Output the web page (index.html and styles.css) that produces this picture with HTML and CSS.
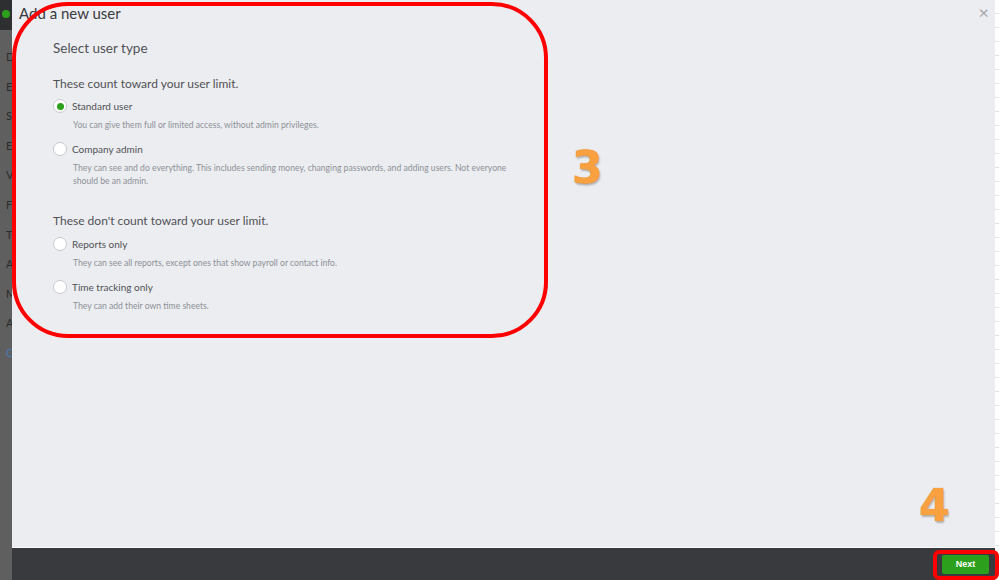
FILE: index.html
```html
<!DOCTYPE html>
<html lang="en">

<head>
    <meta charset="UTF-8">
    <meta name="viewport" content="width=device-width, initial-scale=1.0">
    <title>Add a new user</title>
    <link rel="stylesheet" href="styles.css">
</head>

<body>
    <div class="app">
        <aside class="sidebar">
            <div class="brand"><span class="brand-dot"></span></div>
            <ul class="nav">
                <li>D</li>
                <li>E</li>
                <li>S</li>
                <li>E</li>
                <li>V</li>
                <li>F</li>
                <li>T</li>
                <li>A</li>
                <li>M</li>
                <li>A</li>
                <li class="nav-link">C</li>
            </ul>
        </aside>

        <div class="dialog">
            <div class="dialog-body">
                <div class="dialog-head">
                    <h1>Add a new user</h1>
                    <span class="close">&times;</span>
                </div>

                <div class="user-types">
                    <h2>Select user type</h2>

                    <h3>These count toward your user limit.</h3>
                    <div class="option">
                        <span class="radio checked"></span>
                        <div>
                            <div class="option-title">Standard user</div>
                            <p>You can give them full or limited access, without admin privileges.</p>
                        </div>
                    </div>
                    <div class="option">
                        <span class="radio"></span>
                        <div>
                            <div class="option-title">Company admin</div>
                            <p>They can see and do everything. This includes sending money, changing passwords, and adding users. Not everyone should be an admin.</p>
                        </div>
                    </div>

                    <h3 class="second">These don't count toward your user limit.</h3>
                    <div class="option">
                        <span class="radio"></span>
                        <div>
                            <div class="option-title">Reports only</div>
                            <p>They can see all reports, except ones that show payroll or contact info.</p>
                        </div>
                    </div>
                    <div class="option">
                        <span class="radio"></span>
                        <div>
                            <div class="option-title">Time tracking only</div>
                            <p>They can add their own time sheets.</p>
                        </div>
                    </div>
                </div>

                <!-- annotations drawn on the screenshot -->
                <div class="mark-box"></div>
                <span class="step step-3">3</span>
                <span class="step step-4">4</span>
            </div>

            <div class="dialog-foot">
                <button class="btn-next">Next</button>
                <div class="mark-next"></div>
            </div>
        </div>

        <div class="edge"></div>
    </div>
</body>

</html>
```

FILE: styles.css
```css
* {
    box-sizing: border-box;
}

body {
    margin: 0;
    font-family: Lato, "Open Sans", sans-serif;
    color: #393a3d;
    overflow: hidden;
}

.app {
    display: flex;
    height: 580px;
}

.sidebar {
    width: 12px;
    flex: none;
    background: #5f5f60;
    overflow: hidden;
}

.brand {
    height: 30px;
    background: #2e2f30;
    padding: 10px 0 0 0;
}

.brand-dot {
    display: block;
    width: 8px;
    height: 8px;
    margin-left: 2px;
    border-radius: 50%;
    background: #2ca01c;
}

.nav {
    list-style: none;
    margin: 0;
    padding: 20px 0 0 6px;
    font-size: 11px;
    color: #2b2b2b;
}

.nav li {
    height: 29.6px;
}

.nav .nav-link {
    color: #4a78b0;
}

.dialog {
    flex: 1;
    display: flex;
    flex-direction: column;
    min-width: 0;
}

.dialog-body {
    position: relative;
    flex: 1;
    background: #ecedf1;
    border-bottom: 1px solid #fafafa;
}

.dialog-head {
    display: flex;
    justify-content: space-between;
    align-items: flex-start;
    padding: 4px 6px 0 7px;
}

.dialog-head h1 {
    margin: 0;
    font-size: 15px;
    font-weight: 400;
    color: #393a3d;
}

.close {
    font-size: 18px;
    line-height: 17px;
    color: #a5a6a9;
    margin-top: 0;
}

.user-types {
    padding: 18px 0 0 41px;
    width: 520px;
}

.user-types h2 {
    margin: 0 0 20px;
    font-size: 13.5px;
    font-weight: 400;
    color: #505155;
}

.user-types h3 {
    margin: 0 0 8px;
    font-size: 12px;
    font-weight: 400;
    color: #505155;
}

.user-types h3.second {
    margin: 25px 0 9px;
}

.option {
    display: flex;
    gap: 5px;
    margin-bottom: 10px;
}

.radio {
    flex: none;
    width: 14px;
    height: 14px;
    border-radius: 50%;
    background: #fff;
    border: 1px solid #c9cace;
    display: flex;
    align-items: center;
    justify-content: center;
}

.radio.checked::after {
    content: "";
    width: 7px;
    height: 7px;
    border-radius: 50%;
    background: #2ca01c;
}

.option-title {
    font-size: 10px;
    line-height: 14px;
    color: #505155;
}

.option p {
    max-width: 445px;
    margin: 6px 0 0 1px;
    font-size: 8.6px;
    line-height: 13px;
    color: #8d9096;
}

.mark-box {
    position: absolute;
    left: 0;
    top: 2px;
    width: 536px;
    height: 336px;
    border: 4px solid #ff0000;
    border-radius: 56px;
}

.step {
    position: absolute;
    font-family: "DejaVu Sans", sans-serif;
    font-size: 44px;
    font-weight: 700;
    line-height: 44px;
    color: #f9a040;
    text-shadow: 0 0 1px #e07a10, 1px 2px 2px rgba(0, 0, 0, 0.25);
}

.step-3 {
    left: 560px;
    top: 146px;
}

.step-4 {
    left: 907px;
    top: 484px;
}

.dialog-foot {
    position: relative;
    height: 32px;
    flex: none;
    background: #393a3d;
    display: flex;
    justify-content: flex-end;
    align-items: center;
    padding-right: 6px;
}

.btn-next {
    width: 47px;
    height: 19px;
    border: none;
    border-radius: 2px;
    background: #2ca01c;
    color: #fff;
    font-family: "Liberation Sans", Arial, sans-serif;
    font-size: 9px;
    font-weight: 700;
    padding: 0;
}

.mark-next {
    position: absolute;
    right: -4px;
    top: 2px;
    width: 66px;
    height: 30px;
    border: 4px solid #ff0000;
    border-radius: 6px;
}

.edge {
    width: 4px;
    flex: none;
    background: repeating-linear-gradient(#fff 0 13px, #e2e2e2 13px 14px);
}
```
